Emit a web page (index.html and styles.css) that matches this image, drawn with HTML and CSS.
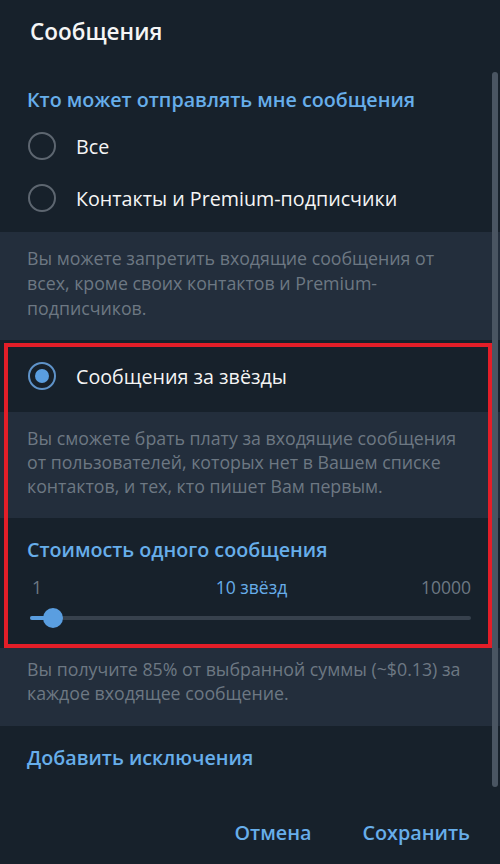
FILE: index.html
```html
<!DOCTYPE html>
<html lang="ru">
<head>
    <meta charset="UTF-8">
    <meta name="viewport" content="width=device-width, initial-scale=1.0">
    <title>Сообщения</title>
    <link rel="stylesheet" href="styles.css">
</head>
<body>
    <div class="dialog">
        <!-- Header -->
        <div class="dialog-title">Сообщения</div>

        <div class="dialog-body">
            <div class="scrollbar"></div>

            <!-- Who can write -->
            <div class="section">
                <div class="section-header">Кто может отправлять мне сообщения</div>
                <label class="radio-row">
                    <span class="radio"></span>
                    <span class="radio-text">Все</span>
                </label>
                <label class="radio-row">
                    <span class="radio"></span>
                    <span class="radio-text">Контакты и Premium-подписчики</span>
                </label>
            </div>

            <div class="hint hint-first">
                Вы можете запретить входящие сообщения от всех, кроме своих контактов и Premium-подписчиков.
            </div>

            <!-- Paid messages -->
            <div class="section section-radio">
                <label class="radio-row">
                    <span class="radio checked"></span>
                    <span class="radio-text">Сообщения за звёзды</span>
                </label>
            </div>

            <div class="hint hint-second">
                Вы сможете брать плату за входящие сообщения от пользователей, которых нет в Вашем списке контактов, и тех, кто пишет Вам первым.
            </div>

            <div class="section section-price">
                <div class="section-header">Стоимость одного сообщения</div>
                <div class="price-labels">
                    <span class="price-min">1</span>
                    <span class="price-value">10 звёзд</span>
                    <span class="price-max">10000</span>
                </div>
                <div class="slider">
                    <div class="slider-track"></div>
                    <div class="slider-fill"></div>
                    <div class="slider-thumb"></div>
                </div>
            </div>

            <div class="hint hint-third">
                Вы получите 85% от выбранной суммы (~$0.13) за каждое входящее сообщение.
            </div>

            <div class="section section-link">
                <div class="section-header">Добавить исключения</div>
            </div>

            <!-- Annotation frame -->
            <div class="highlight"></div>
        </div>

        <!-- Footer -->
        <div class="dialog-footer">
            <span class="btn">Отмена</span>
            <span class="btn">Сохранить</span>
        </div>
    </div>
</body>
</html>
```

FILE: styles.css
```css
/* General Styles */
body {
    margin: 0;
    padding: 0;
    font-family: 'Open Sans', 'Noto Sans', sans-serif;
    background: #17212b;
    color: #f5f5f5;
}

.dialog {
    display: flex;
    flex-direction: column;
    height: 100vh;
    overflow: hidden;
    background: #17212b;
}

/* Title */
.dialog-title {
    height: 66px;
    line-height: 64px;
    padding-left: 30px;
    font-size: 22.5px;
    font-weight: 600;
    color: #f5f5f5;
    flex-shrink: 0;
}

.dialog-body {
    position: relative;
    flex: 1;
    overflow: hidden;
}

.scrollbar {
    position: absolute;
    top: 6px;
    right: 2px;
    width: 6px;
    height: 715px;
    border-radius: 3px;
    background: #4a5562;
    z-index: 2;
}

/* Sections */
.section {
    padding: 22px 27px 8px;
}

.section-header {
    font-size: 19.7px;
    font-weight: 600;
    line-height: 24px;
    color: #67aeea;
}

.section .section-header + .radio-row {
    margin-top: 8px;
}

.radio-row {
    display: flex;
    align-items: center;
    height: 52px;
}

.radio {
    width: 24px;
    height: 24px;
    margin-left: 1px;
    border: 2px solid #5d6670;
    border-radius: 50%;
    position: relative;
    flex-shrink: 0;
}

.radio.checked {
    border-color: #5f93c9;
}

.radio.checked::after {
    content: '';
    position: absolute;
    top: 5px;
    left: 5px;
    width: 14px;
    height: 14px;
    border-radius: 50%;
    background: #5a9ee0;
}

.radio-text {
    margin-left: 20px;
    font-size: 19.7px;
    color: #f5f5f5;
}

.section-radio {
    padding: 10px 27px;
}

/* Hints */
.hint {
    background: #232e3c;
    color: #6d7883;
    font-size: 17.75px;
    line-height: 24px;
    padding: 14px 26px 20px 27px;
}

.hint-first {
    line-height: 25px;
    padding-bottom: 19px;
}

.hint-third {
    padding-top: 9px;
    padding-bottom: 21px;
}

/* Price slider */
.section-price {
    padding: 20px 29px 20px 30px;
}

.section-price .section-header {
    margin-left: -3px;
}

.price-labels {
    display: flex;
    justify-content: space-between;
    margin-top: 14px;
    font-size: 17.5px;
    line-height: 22px;
    color: #6d7883;
}

.price-min {
    padding-left: 2px;
    width: 60px;
}

.price-max {
    width: 60px;
    text-align: right;
}

.price-value {
    color: #67aeea;
}

.slider {
    position: relative;
    height: 20px;
    margin-top: 10px;
}

.slider-track {
    position: absolute;
    left: 0;
    right: 0;
    top: 8px;
    height: 4px;
    border-radius: 2px;
    background: #37414d;
}

.slider-fill {
    position: absolute;
    left: 0;
    top: 8px;
    width: 23px;
    height: 4px;
    border-radius: 2px;
    background: #5a9ee0;
}

.slider-thumb {
    position: absolute;
    left: 13px;
    top: 0;
    width: 20px;
    height: 20px;
    border-radius: 50%;
    background: #5a9ee0;
}

.section-link {
    padding: 20px 27px 20px;
}

/* Red annotation frame */
.highlight {
    position: absolute;
    left: 4px;
    top: 277px;
    width: 480px;
    height: 297px;
    border: 4px solid #e31e28;
    z-index: 3;
}

/* Footer */
.dialog-footer {
    height: 74px;
    flex-shrink: 0;
    display: flex;
    justify-content: flex-end;
    gap: 51px;
    padding: 31px 30px 0 0;
    box-sizing: border-box;
}

.btn {
    font-size: 19.8px;
    font-weight: 600;
    line-height: 24px;
    color: #67aeea;
    cursor: pointer;
}
```
